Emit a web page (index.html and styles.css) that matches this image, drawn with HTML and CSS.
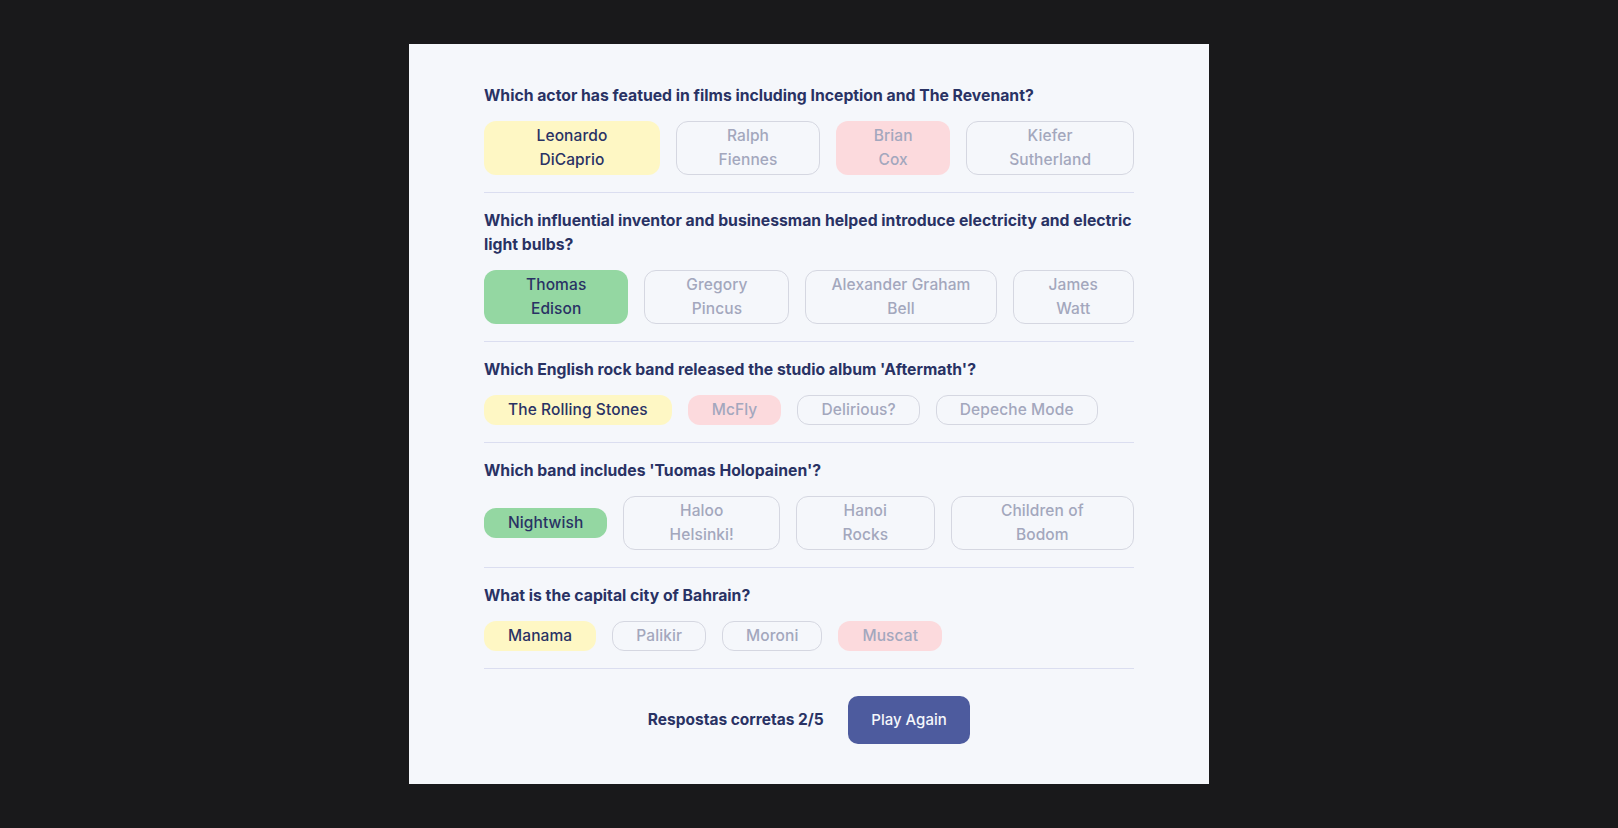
FILE: index.html
```html
<!DOCTYPE html>
<html lang="en">
<head>
<meta charset="utf-8">
<title>Quizzical</title>
<link rel="stylesheet" href="styles.css">
</head>
<body>
<main class="quiz">
  <section class="question">
    <h2 class="question-title">Which actor has featued in films including Inception and The Revenant?</h2>
    <div class="answers">
      <button class="answer answer--missed">Leonardo DiCaprio</button>
      <button class="answer answer--idle">Ralph Fiennes</button>
      <button class="answer answer--wrong">Brian Cox</button>
      <button class="answer answer--idle">Kiefer Sutherland</button>
    </div>
  </section>
  <section class="question">
    <h2 class="question-title">Which influential inventor and businessman helped introduce electricity and electric light bulbs?</h2>
    <div class="answers">
      <button class="answer answer--correct">Thomas Edison</button>
      <button class="answer answer--idle">Gregory Pincus</button>
      <button class="answer answer--idle">Alexander Graham Bell</button>
      <button class="answer answer--idle">James Watt</button>
    </div>
  </section>
  <section class="question">
    <h2 class="question-title">Which English rock band released the studio album 'Aftermath'?</h2>
    <div class="answers">
      <button class="answer answer--missed">The Rolling Stones</button>
      <button class="answer answer--wrong">McFly</button>
      <button class="answer answer--idle">Delirious?</button>
      <button class="answer answer--idle">Depeche Mode</button>
    </div>
  </section>
  <section class="question">
    <h2 class="question-title">Which band includes 'Tuomas Holopainen'?</h2>
    <div class="answers">
      <button class="answer answer--correct">Nightwish</button>
      <button class="answer answer--idle">Haloo Helsinki!</button>
      <button class="answer answer--idle">Hanoi Rocks</button>
      <button class="answer answer--idle">Children of Bodom</button>
    </div>
  </section>
  <section class="question">
    <h2 class="question-title">What is the capital city of Bahrain?</h2>
    <div class="answers">
      <button class="answer answer--missed">Manama</button>
      <button class="answer answer--idle">Palikir</button>
      <button class="answer answer--idle">Moroni</button>
      <button class="answer answer--wrong">Muscat</button>
    </div>
  </section>
  <footer class="result">
    <p class="score">Respostas corretas 2/5</p>
    <button class="play-again">Play Again</button>
  </footer>
</main>
</body>
</html>
```
FILE: styles.css
```css
* {
  box-sizing: border-box;
}

body {
  margin: 0;
  min-height: 100vh;
  background: #19191b;
  display: flex;
  justify-content: center;
  align-items: flex-start;
  padding-top: 44px;
  font-family: "Inter", "Liberation Sans", sans-serif;
  color: #293264;
}

.quiz {
  width: 800px;
  background: #f5f7fb;
  padding: 40px 75px;
  display: flex;
  flex-direction: column;
}

.question {
  padding: 16px 0 17px;
  border-bottom: 1px solid #dbdef0;
}

.question:first-child {
  padding-top: 0;
}

.question-title {
  margin: 0 0 13px;
  font-size: 15.75px;
  font-weight: 700;
  line-height: 24px;
  color: #293264;
}

.answers {
  display: flex;
  align-items: center;
  gap: 16px;
}

.answer {
  font-family: inherit;
  font-size: 15.5px;
  font-weight: 500;
  line-height: 24px;
  letter-spacing: 0.1px;
  padding: 2px 23px;
  border: 1px solid transparent;
  border-radius: 12px;
  background: transparent;
  color: #293264;
  text-align: center;
  cursor: pointer;
}

.answer--idle {
  border-color: #d5d7e1;
  color: #a3a7bd;
}

.answer--missed {
  background: #fef7c4;
  color: #293264;
}

.answer--wrong {
  background: #fcdadd;
  color: #a3a7bd;
}

.answer--correct {
  background: #94d7a2;
  color: #293264;
}

.result {
  display: flex;
  justify-content: center;
  align-items: center;
  gap: 24px;
  margin-top: 27px;
}

.score {
  margin: 0;
  font-size: 15.5px;
  font-weight: 700;
  line-height: 24px;
  color: #293264;
}

.play-again {
  font-family: inherit;
  font-size: 15px;
  font-weight: 500;
  line-height: 24px;
  padding: 12px 23.5px;
  border: none;
  border-radius: 10px;
  background: #4d5b9e;
  color: #f5f7fb;
  cursor: pointer;
}
```
